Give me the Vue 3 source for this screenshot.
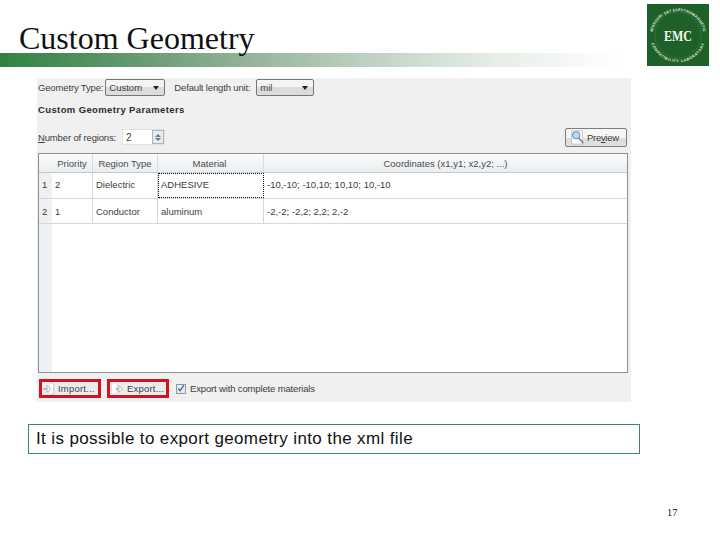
<script setup>
const rows = [
  { n: 1, priority: '2', type: 'Dielectric', material: 'ADHESIVE', coords: '-10,-10; -10,10; 10,10; 10,-10', focus: true },
  { n: 2, priority: '1', type: 'Conductor', material: 'aluminum', coords: '-2,-2; -2,2; 2,2; 2,-2', focus: false }
]
</script>

<template>
  <div class="slide">
    <header class="head">
      <h1 class="title">Custom Geometry</h1>
      <svg class="logo" viewBox="0 0 62 62" width="62" height="62">
        <rect width="62" height="62" fill="#1e6128" />
        <defs>
          <path id="ringTop" d="M5 33a26 26 0 0 1 52 0" />
          <path id="ringBottom" d="M3 35a28.500 28.500 0 0 0 56 0" />
        </defs>
        <circle cx="31" cy="31" r="23" fill="none" stroke="#dfe9dc" stroke-width=".4" stroke-dasharray="1 1" opacity=".6" />
        <text class="ring"><textPath href="#ringTop" startOffset="50%" text-anchor="middle">MISSOURI S&amp;T ELECTROMAGNETIC</textPath></text>
        <text class="ring ring-b"><textPath href="#ringBottom" startOffset="50%" text-anchor="middle">COMPATIBILITY LABORATORY</textPath></text>
        <text class="emc" x="31" y="37" text-anchor="middle" textLength="28" lengthAdjust="spacingAndGlyphs">EMC</text>
      </svg>
    </header>
    <div class="band"></div>

    <section class="panel">
      <div class="top-row">
        <span class="lbl">Geometry Type:</span>
        <span class="select sel-a">Custom<i class="caret"></i></span>
        <span class="lbl lbl-b">Default length unit:</span>
        <span class="select sel-b">mil<i class="caret"></i></span>
      </div>
      <div class="section-title">Custom Geometry Parameters</div>
      <div class="num-row">
        <span class="lbl"><u>N</u>umber of regions:</span>
        <span class="spin">
          <span class="spin-val">2</span>
          <span class="spin-btns"><i class="up"></i><i class="down"></i></span>
        </span>
        <button class="btn preview">
          <svg width="15" height="17" viewBox="0 0 17 17">
            <rect x="2" y="1" width="12" height="15" fill="#fff" stroke="#b9c4cf" />
            <circle cx="7" cy="6" r="4" fill="#bcdcf5" stroke="#6f93b5" stroke-width="1.200" />
            <path d="M10 9l5 6" stroke="#66707a" stroke-width="1.500" />
          </svg>
          <span>Pre<u>v</u>iew</span>
        </button>
      </div>

      <div class="table">
        <div class="tr thead">
          <div class="rh"></div>
          <div class="c c1 hc">Priority</div>
          <div class="c c2 hc">Region Type</div>
          <div class="c c3 hc">Material</div>
          <div class="c c4 hc">Coordinates (x1,y1; x2,y2; ...)</div>
        </div>
        <div v-for="(r, i) in rows" :key="r.n" class="tr" :class="i === 0 ? 'row-a' : 'row-b'">
          <div class="rh">{{ r.n }}</div>
          <div class="c c1">{{ r.priority }}</div>
          <div class="c c2">{{ r.type }}</div>
          <div class="c c3" :class="{ focus: r.focus }">{{ r.material }}</div>
          <div class="c c4">{{ r.coords }}</div>
        </div>
        <div class="tr filler"><div class="rh"></div></div>
      </div>

      <div class="bottom-row">
        <button class="btn io">
          <svg width="14" height="13" viewBox="0 0 14 14">
            <path d="M8 1h4v12H8" fill="#fff" stroke="#c9ced3" />
            <path d="M1 7h4V4l4 3.500L5 11V8H1z" fill="#fff" stroke="#9aa3ab" stroke-width=".8" />
          </svg>
          <span>Import...</span>
        </button>
        <button class="btn io">
          <svg width="15" height="13" viewBox="0 0 15 14">
            <path d="M1 1h6v12H1z" fill="#fff" stroke="#d5d9dc" />
            <path d="M6 7h3V4l4 3.500L9 11V8H6z" fill="#fff" stroke="#9aa3ab" stroke-width=".8" />
          </svg>
          <span>Export...</span>
        </button>
        <span class="check"><svg width="9" height="9" viewBox="0 0 9 9"><path d="M1.500 4.500l2 2.500 4-6" fill="none" stroke="#3d5a80" stroke-width="1.400" /></svg></span>
        <span class="lbl check-lbl">Export with complete materials</span>
      </div>
    </section>

    <div class="caption">It is possible to export geometry into the xml file</div>
    <footer class="page">17</footer>
  </div>
</template>

<style>
html, body { margin: 0; background: #fff; }
</style>

<style scoped>
.slide {
  position: relative;
  width: 720px;
  height: 540px;
  overflow: hidden;
  background: #fff;
  font-family: "Liberation Sans", Arial, sans-serif;
  color: #333;
}
.head { height: 53px; padding-left: 19px; box-sizing: border-box; }
.title {
  margin: 0;
  padding-top: 19px;
  font: 400 32px/38px "Liberation Serif", "Times New Roman", serif;
  color: #111;
}
.logo { position: absolute; left: 647px; top: 4px; }
.ring { font: 700 3.700px "Liberation Sans", sans-serif; fill: #e6eee3; letter-spacing: .2px; }
.ring-b { letter-spacing: .6px; }
.emc { font: 700 15px "Liberation Serif", serif; fill: #f3f6f1; }
.band {
  height: 14px;
  width: 620px;
  background: linear-gradient(90deg, #2f8243 0%, #5d9467 18%, #8fb095 38%, #bccfc0 58%, #e6eee7 80%, #fff 100%);
}
.panel {
  box-sizing: border-box;
  width: 594px;
  height: 324px;
  margin: 11px 0 0 37px;
  padding-left: 1px;
  background: #f0f0f0;
  font-size: 9.500px;
  color: #3c3c3c;
}
.top-row { display: flex; align-items: center; height: 19px; }
.lbl { white-space: nowrap; letter-spacing: -.15px; }
.lbl-b { margin-left: 9px; width: 82px; }
.select {
  position: relative;
  box-sizing: border-box;
  height: 17px;
  line-height: 15px;
  padding-left: 3px;
  border: 1px solid #767676;
  border-radius: 2px;
  background: linear-gradient(#f4f4f4 50%, #dcdcdc 50%);
}
.sel-a { width: 60px; margin-left: 2px; }
.sel-b { width: 58px; }
.caret {
  position: absolute;
  right: 5px;
  top: 6px;
  border: 3px solid transparent;
  border-top: 4px solid #222;
  border-bottom: 0;
}
.section-title { margin-top: 5px; height: 15px; line-height: 15px; font-weight: 700; letter-spacing: .38px; color: #2c2c2c; }
.num-row { display: flex; align-items: center; height: 20px; margin-top: 10px; }
.spin {
  display: flex;
  box-sizing: border-box;
  width: 43px;
  height: 16px;
  margin-left: 6px;
  background: #fff;
  border: 1px solid #dfe3e6;
}
.spin-val { flex: 1; padding-left: 3px; line-height: 16px; font-size: 10px; }
.spin-btns {
  display: flex;
  flex-direction: column;
  align-items: center;
  justify-content: space-around;
  box-sizing: border-box;
  width: 12px;
  padding: 2px 0;
  border: 1px solid #aeb4ba;
  background: #e8ecef;
}
.up { border: 3px solid transparent; border-bottom: 3px solid #6c7a86; border-top: 0; }
.down { border: 3px solid transparent; border-top: 3px solid #6c7a86; border-bottom: 0; }
.btn {
  display: flex;
  align-items: center;
  margin: 0;
  padding: 0;
  font: inherit;
  color: inherit;
  box-sizing: border-box;
}
.preview {
  gap: 2px;
  width: 62px;
  height: 19px;
  margin-left: auto;
  margin-right: 4px;
  padding-left: 4px;
  letter-spacing: -.3px;
  border: 1px solid #7d7d7d;
  border-radius: 2px;
  background: linear-gradient(#f6f6f6 50%, #dedede 50%);
}
.table {
  box-sizing: border-box;
  width: 590px;
  height: 220px;
  margin-top: 6px;
  display: flex;
  flex-direction: column;
  background: #fff;
  border: 1px solid #8f8f8f;
}
.tr { display: flex; border-bottom: 1px solid #d6d6d6; flex: none; }
.thead { height: 18px; background: linear-gradient(#fbfbfb, #e9eef1); border-bottom: 1px solid #c9c9c9; }
.row-a { height: 25px; line-height: 24px; }
.row-b { height: 24px; line-height: 25px; }
.filler { flex: 1; border-bottom: 0; }
.rh {
  box-sizing: border-box;
  width: 13px;
  padding-left: 3px;
  background: #eef1f3;
}
.thead .rh { background: transparent; }
.filler .rh { height: 100%; }
.c {
  box-sizing: border-box;
  padding-left: 3px;
  border-right: 1px solid #d6d6d6;
  white-space: nowrap;
}
.hc { text-align: center; line-height: 19px; color: #4a4a4a; padding: 0; border-right-color: #d9dde0; }
.c1 { width: 41px; }
.c2 { width: 65px; }
.c3 { width: 106px; }
.c4 { flex: 1; border-right: 0; }
.hc.c3 { padding-right: 2px; }
.focus { border: 1px dotted #111; line-height: 22px; padding-left: 2px; }
.bottom-row { display: flex; align-items: center; height: 19px; margin-top: 6px; padding-left: 1px; }
.io {
  gap: 2px;
  width: 62px;
  height: 19px;
  letter-spacing: .2px;
  border: 3px solid #d0141f;
  background: #ececec;
  margin-right: 6px;
}
.check {
  display: flex;
  align-items: center;
  justify-content: center;
  box-sizing: border-box;
  width: 10px;
  height: 10px;
  margin-left: 1px;
  border: 1px solid #8b9aaa;
  background: #e6ecf3;
}
.check-lbl { margin-left: 4px; }
.caption {
  box-sizing: border-box;
  width: 612px;
  height: 30px;
  margin: 22px 0 0 28px;
  padding-left: 7px;
  line-height: 28px;
  border: 1px solid #3b8a5c;
  font-size: 17px;
  letter-spacing: .37px;
  color: #111;
}
.page {
  margin: 52px 0 0 667px;
  font: 10.500px/14px "Liberation Serif", serif;
  color: #111;
}
</style>
